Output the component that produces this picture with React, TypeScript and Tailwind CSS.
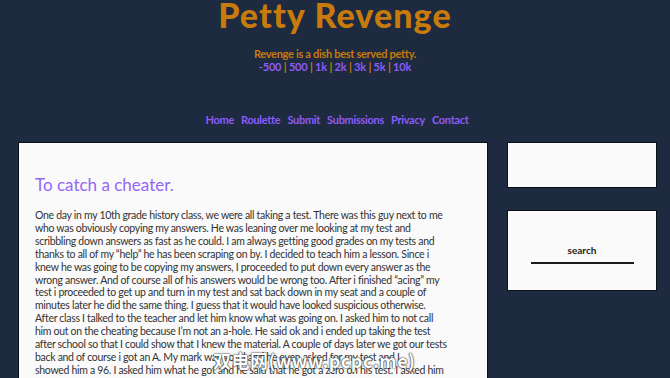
import React from "react";

const lines = [
  "One day in my 10th grade history class, we were all taking a test. There was this guy next to me",
  "who was obviously copying my answers. He was leaning over me looking at my test and",
  "scribbling down answers as fast as he could. I am always getting good grades on my tests and",
  "thanks to all of my “help” he has been scraping on by. I decided to teach him a lesson. Since i",
  "knew he was going to be copying my answers, I proceeded to put down every answer as the",
  "wrong answer. And of course all of his answers would be wrong too. After i finished “acing” my",
  "test i proceeded to get up and turn in my test and sat back down in my seat and a couple of",
  "minutes later he did the same thing. I guess that it would have looked suspicious otherwise.",
  "After class I talked to the teacher and let him know what was going on. I asked him to not call",
  "him out on the cheating because I’m not an a-hole. He said ok and i ended up taking the test",
  "after school so that I could show that I knew the material. A couple of days later we got our tests",
  "back and of course i got an A. My mark was good and he even asked for my test and I",
  "showed him a 96. I asked him what he got and he said that he got a zero on his test. I asked him",
];

const ranges = ["-500", "500", "1k", "2k", "3k", "5k", "10k"];
const nav = ["Home", "Roulette", "Submit", "Submissions", "Privacy", "Contact"];

export default function App() {
  return (
    <div className="min-h-[378px] h-[378px] overflow-hidden bg-[#1e2a40] font-['Lato','Noto_Sans',sans-serif]">
      <header className="text-center">
        <h1 className="text-[34px] leading-[28px] font-black tracking-[1.1px] text-[#c67b0b] pt-[1px]">
          Petty Revenge
        </h1>
        <p className="mt-[18px] text-[11px] leading-[13px] font-bold tracking-[-0.3px] text-[#c67b0b]">
          Revenge is a dish best served petty.
        </p>
        <p className="text-[11px] leading-[13px] font-bold tracking-[-0.2px] text-[#8b5cf6]">
          {ranges.map((r, i) => (
            <span key={r}>
              {i > 0 && <span className="text-[#c67b0b]"> | </span>}
              <a href="#">{r}</a>
            </span>
          ))}
        </p>
        <nav className="mt-[40px] flex justify-center gap-[7px] pl-[4px] text-[11px] leading-[14px] font-bold tracking-[-0.3px] text-[#8b5cf6]">
          {nav.map((n) => (
            <a key={n} href="#">
              {n}
            </a>
          ))}
        </nav>
      </header>

      <div className="mt-[15px] flex gap-[19px] pl-[18px]">
        <main className="relative w-[470px] shrink-0 border border-[#0b0f18] bg-[#fafafa] px-[16px] pt-[32px] pb-6">
          <h2 className="text-[17px] leading-[20px] text-[#9466f7]">To catch a cheater.</h2>
          <p className="mt-[14px] text-[10.5px] leading-[12.9px] tracking-[-0.3px] text-[#333333] whitespace-nowrap">
            {lines.map((l, i) => (
              <React.Fragment key={i}>
                {l}
                {i < lines.length - 1 && <br />}
              </React.Fragment>
            ))}
          </p>
          <div className="pointer-events-none absolute left-[194px] top-[204px] text-[18px] font-bold tracking-[0.5px] text-white [text-shadow:0_0_2px_#222,0_0_1px_#000] font-['Noto_Sans_CJK_SC','Noto_Sans',sans-serif]">
            双电网(www.pcpc.me)
          </div>
        </main>

        <aside className="flex w-[150px] shrink-0 flex-col gap-[22px]">
          <div className="h-[46px] border border-[#0b0f18] bg-[#fafafa]" />
          <div className="flex h-[81px] flex-col items-center border border-[#0b0f18] bg-[#fafafa] pt-[32px]">
            <span className="text-[10px] leading-[14px] font-bold text-[#222222]">search</span>
            <div className="mt-[5px] h-[2px] w-[103px] bg-[#1a1a1a]" />
          </div>
        </aside>
      </div>
    </div>
  );
}
